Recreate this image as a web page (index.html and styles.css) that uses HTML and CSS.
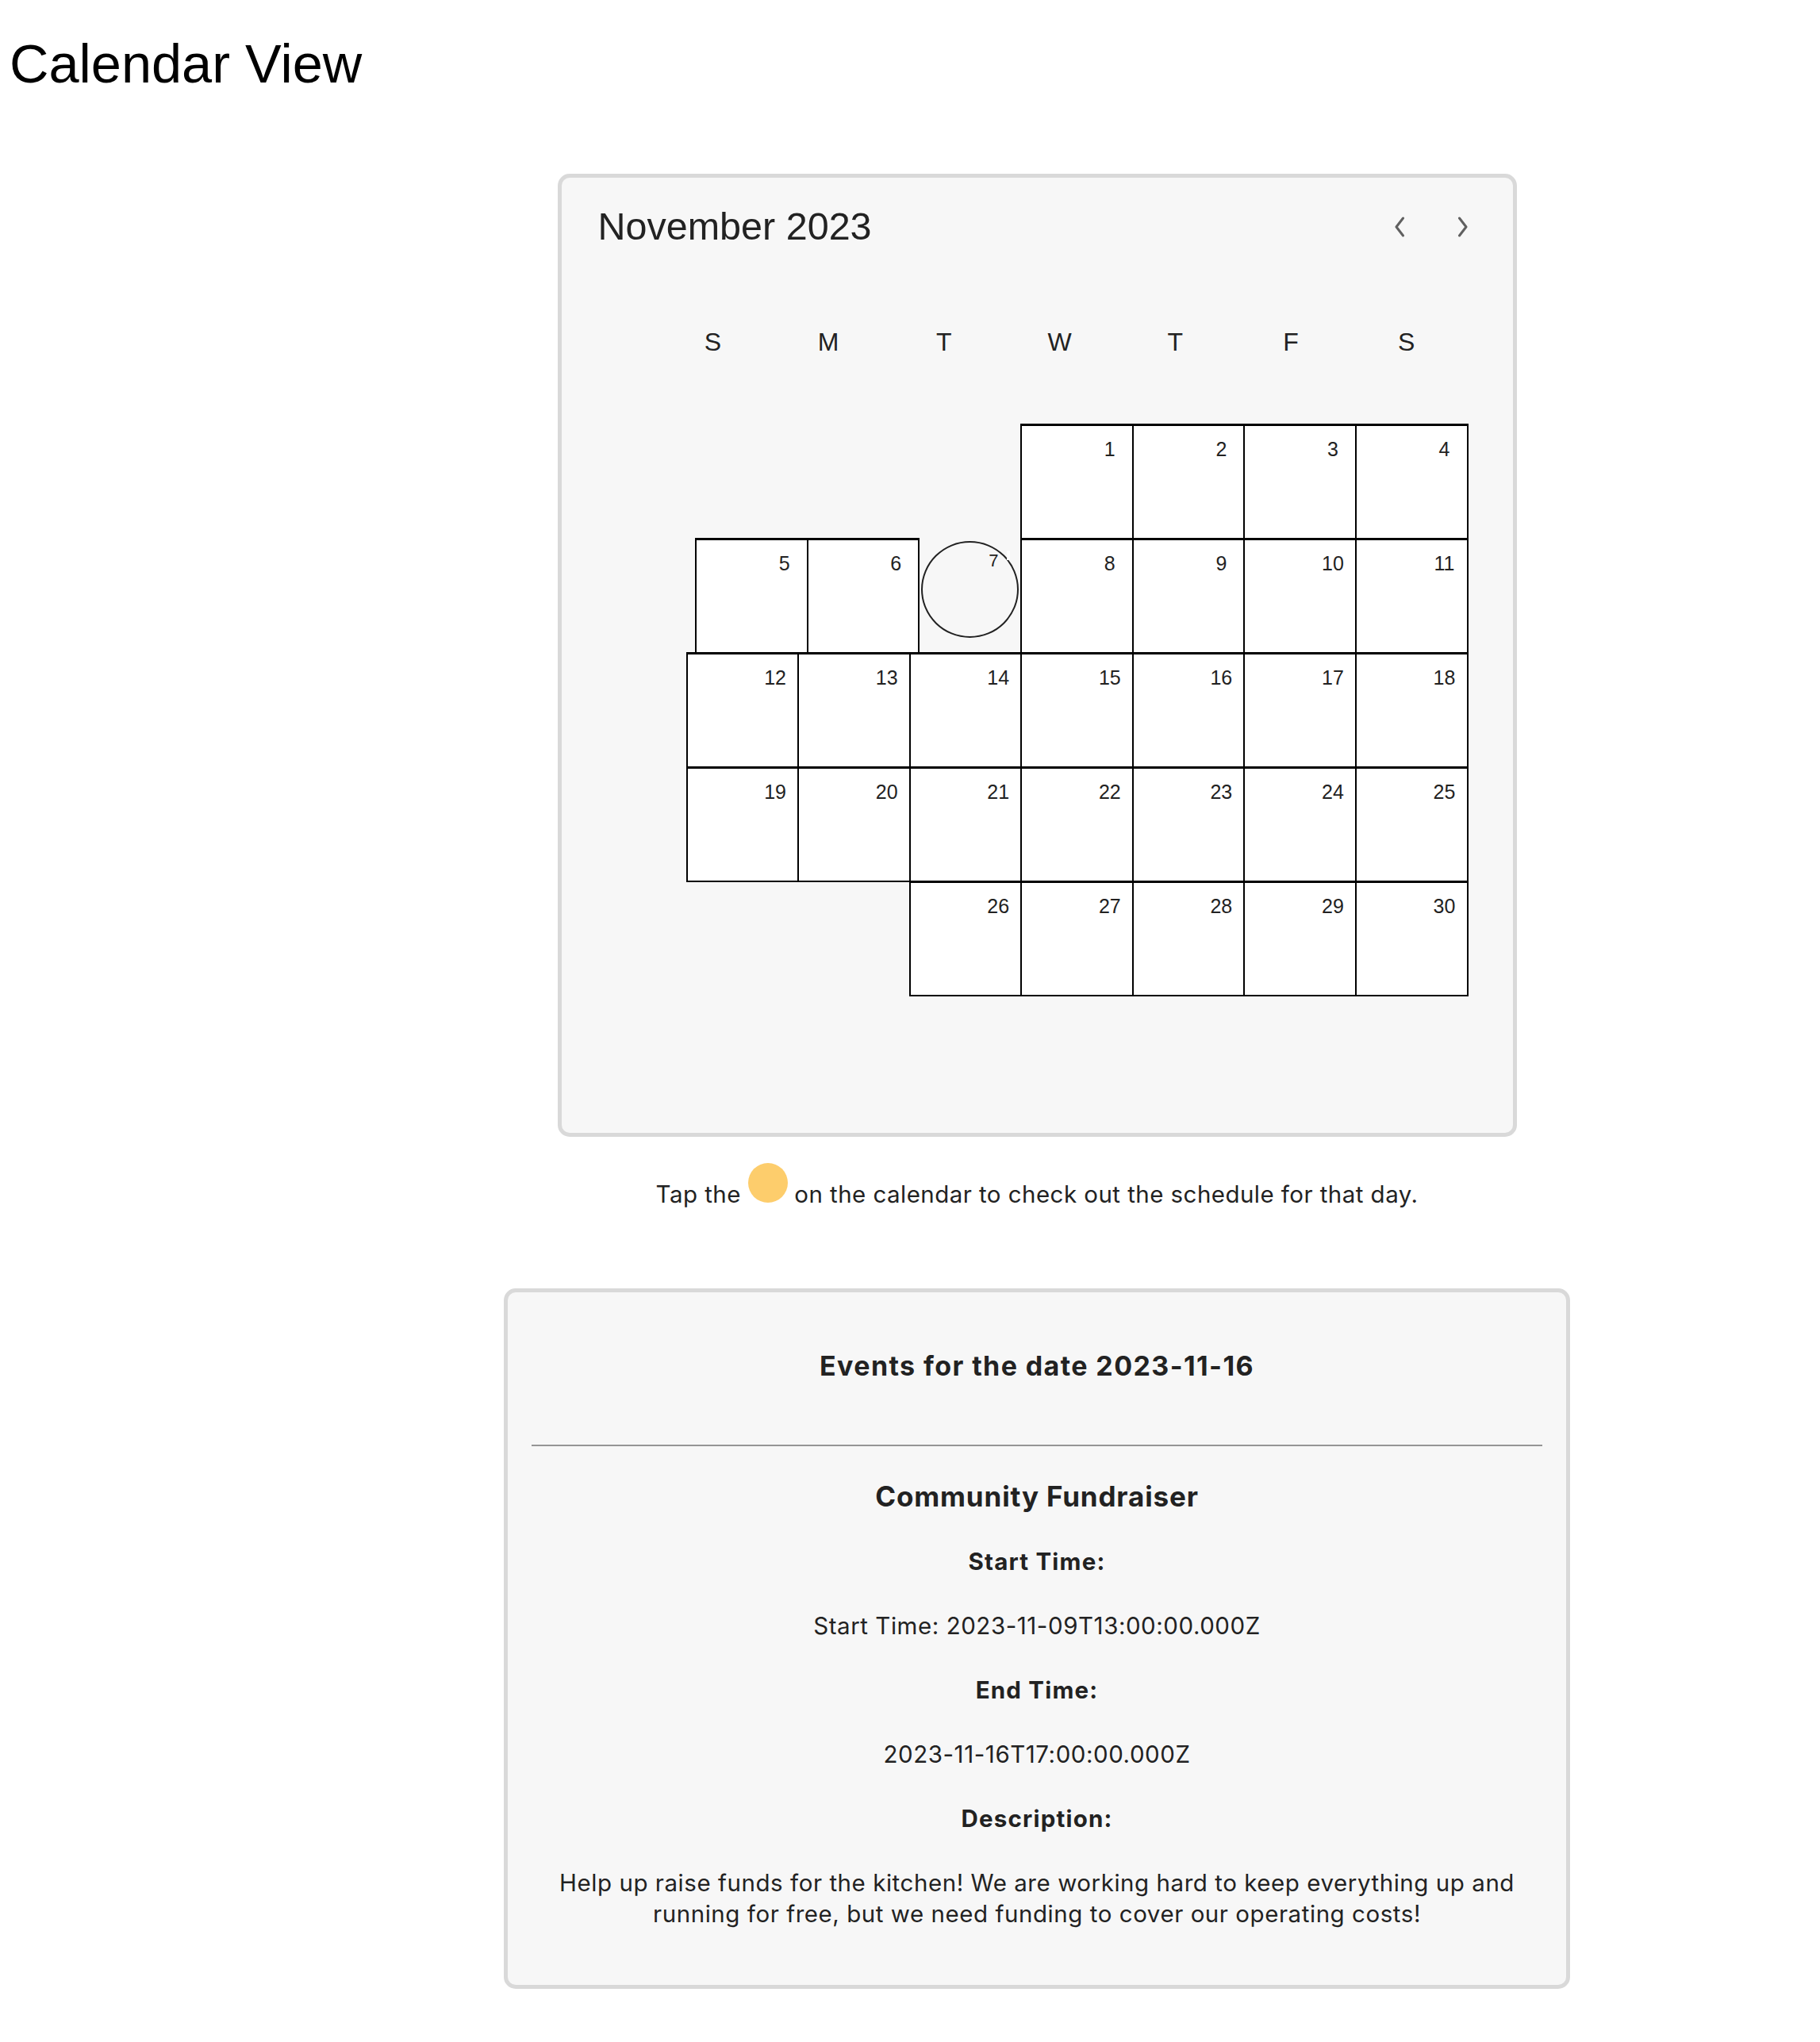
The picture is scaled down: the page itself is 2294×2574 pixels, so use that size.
FILE: index.html
```html
<!DOCTYPE html>
<html lang="en">
<head>
<meta charset="utf-8">
<title>Calendar View</title>
<link rel="stylesheet" href="styles.css">
</head>
<body>
<h1 class="page-title">Calendar View</h1>
<main class="page">
  <section class="calendar">
    <header class="cal-header">
      <h2 class="cal-title">November 2023</h2>
      <div class="cal-nav">
        <button class="nav-btn" aria-label="Previous month">
          <svg width="16" height="26" viewBox="0 0 16 26"><path d="M12.5 2 L4 13 L12.5 24" fill="none" stroke="#606060" stroke-width="3" stroke-linecap="round" stroke-linejoin="round"/></svg>
        </button>
        <button class="nav-btn" aria-label="Next month">
          <svg width="16" height="26" viewBox="0 0 16 26"><path d="M3.5 2 L12 13 L3.5 24" fill="none" stroke="#606060" stroke-width="3" stroke-linecap="round" stroke-linejoin="round"/></svg>
        </button>
      </div>
    </header>
    <div class="weekdays">
      <span>S</span><span>M</span><span>T</span><span>W</span><span>T</span><span>F</span><span>S</span>
    </div>
    <div class="grid">
      <div class="week">
        <div class="day"><span class="num">1</span></div>
        <div class="day"><span class="num">2</span></div>
        <div class="day"><span class="num">3</span></div>
        <div class="day"><span class="num">4</span></div>
      </div>
      <div class="week">
        <div class="day"><span class="num">5</span></div>
        <div class="day"><span class="num">6</span></div>
        <div class="today-slot">
          <div class="today"><span class="num num-today">7</span><span class="today-mark"></span></div>
        </div>
        <div class="day"><span class="num">8</span></div>
        <div class="day"><span class="num">9</span></div>
        <div class="day"><span class="num">10</span></div>
        <div class="day"><span class="num">11</span></div>
      </div>
      <div class="week">
        <div class="day"><span class="num">12</span></div>
        <div class="day"><span class="num">13</span></div>
        <div class="day"><span class="num">14</span></div>
        <div class="day"><span class="num">15</span></div>
        <div class="day"><span class="num">16</span></div>
        <div class="day"><span class="num">17</span></div>
        <div class="day"><span class="num">18</span></div>
      </div>
      <div class="week">
        <div class="day"><span class="num">19</span></div>
        <div class="day"><span class="num">20</span></div>
        <div class="day"><span class="num">21</span></div>
        <div class="day"><span class="num">22</span></div>
        <div class="day"><span class="num">23</span></div>
        <div class="day"><span class="num">24</span></div>
        <div class="day"><span class="num">25</span></div>
      </div>
      <div class="week">
        <div class="day"><span class="num">26</span></div>
        <div class="day"><span class="num">27</span></div>
        <div class="day"><span class="num">28</span></div>
        <div class="day"><span class="num">29</span></div>
        <div class="day"><span class="num">30</span></div>
      </div>
    </div>
  </section>

  <p class="tip">Tap the <span class="dot"></span> on the calendar to check out the schedule for that day.</p>

  <section class="events">
    <h2 class="events-title">Events for the date 2023-11-16</h2>
    <hr class="divider">
    <article class="event">
      <h3 class="event-name">Community Fundraiser</h3>
      <p class="label">Start Time:</p>
      <p>Start Time: 2023-11-09T13:00:00.000Z</p>
      <p class="label">End Time:</p>
      <p>2023-11-16T17:00:00.000Z</p>
      <p class="label">Description:</p>
      <p>Help up raise funds for the kitchen! We are working hard to keep everything up and running for free, but we need funding to cover our operating costs!</p>
    </article>
  </section>
</main>
</body>
</html>
```

FILE: styles.css
```css
html, body {
  margin: 0;
  padding: 0;
  background: #ffffff;
}

body {
  font-family: "Liberation Sans", Arial, sans-serif;
  color: #000;
}

.page-title {
  margin: 0;
  padding: 41px 0 0 12px;
  font-family: "Liberation Sans", Arial, sans-serif;
  font-size: 68.5px;
  font-weight: normal;
  line-height: normal;
  color: #000;
}

.page {
  margin: 99px 0 0 320px;
  display: flex;
  flex-direction: column;
  align-items: center;
  padding-bottom: 60px;
}

/* Calendar card */
.calendar {
  box-sizing: border-box;
  width: 1209px;
  background: #f7f7f7;
  border: 5px solid #d9d9d9;
  border-radius: 15px;
  padding: 34px 39px 173px 46px;
  color: #222;
}

.cal-header {
  display: flex;
  align-items: center;
  justify-content: space-between;
}

.cal-title {
  margin: 0;
  font-size: 48.5px;
  font-weight: normal;
  line-height: 55px;
  color: #222;
}

.cal-nav {
  display: flex;
  gap: 32px;
}

.nav-btn {
  width: 48px;
  height: 48px;
  padding: 0;
  border: 0;
  background: transparent;
  display: flex;
  align-items: center;
  justify-content: center;
}

.weekdays {
  margin: 100px 0 0 72px;
  width: 1020px;
  display: grid;
  grid-template-columns: repeat(7, 1fr);
  font-size: 32px;
  line-height: normal;
  text-align: center;
  color: #222;
}

.grid {
  margin: 85px 0 0 112px;
  width: 984px;
  display: flex;
  flex-direction: column;
}

.week {
  display: flex;
  justify-content: flex-end;
}

.day {
  box-sizing: border-box;
  flex: 0 0 140.57px;
  height: 144px;
  background: #ffffff;
  border: 1px solid #000;
  border-top-width: 2px;
  box-shadow: 0 0 0 1px #000;
  padding-top: 15px;
  display: flex;
  flex-direction: column;
}

.num {
  display: block;
  width: 40px;
  margin: 0 8px 0 auto;
  text-align: center;
  font-size: 25px;
  line-height: normal;
  color: #222;
}

.today-slot {
  flex: 0 0 129px;
  height: 144px;
  box-sizing: border-box;
  padding: 3px 3px 0 3px;
}

.today {
  position: relative;
  box-sizing: border-box;
  width: 123px;
  height: 122px;
  border: 2px solid #222;
  border-radius: 50%;
  padding-top: 10px;
}

.num-today {
  font-size: 22px;
  margin-right: 10px;
}

.today-mark {
  position: absolute;
  left: 106px;
  top: 10px;
  width: 4px;
  height: 12px;
  background: #ffffff;
}

/* Tip */
.tip {
  margin: 33px 0 0;
  font-family: Inter, "Noto Sans", sans-serif;
  font-size: 29.5px;
  line-height: 39px;
  letter-spacing: 0.45px;
  color: #222;
  text-align: center;
}

.dot {
  display: inline-block;
  width: 50px;
  height: 50px;
  border-radius: 50%;
  background: #fdcd6c;
}

/* Events card */
.events {
  margin-top: 99px;
  box-sizing: border-box;
  width: 1344px;
  background: #f7f7f7;
  border: 5px solid #d9d9d9;
  border-radius: 15px;
  padding: 73px 30px 70px;
  text-align: center;
  font-family: Inter, "Noto Sans", sans-serif;
  color: #222;
}

.events-title {
  margin: 0;
  font-size: 34px;
  font-weight: 700;
  line-height: 39px;
  letter-spacing: 1.4px;
}

.divider {
  margin: 80px 0 0;
  height: 0;
  border: 0;
  border-top: 2px solid #959595;
}

.event-name {
  margin: 42px 0 0;
  font-size: 35px;
  font-weight: 700;
  line-height: 42px;
  letter-spacing: 0.85px;
}

.event p {
  margin: 42px 0 0;
  font-size: 29.5px;
  line-height: 39px;
  letter-spacing: 0.55px;
}

.event .label {
  font-weight: 700;
  letter-spacing: 1.2px;
}

.event-name + .label {
  margin-top: 42px;
}
```
